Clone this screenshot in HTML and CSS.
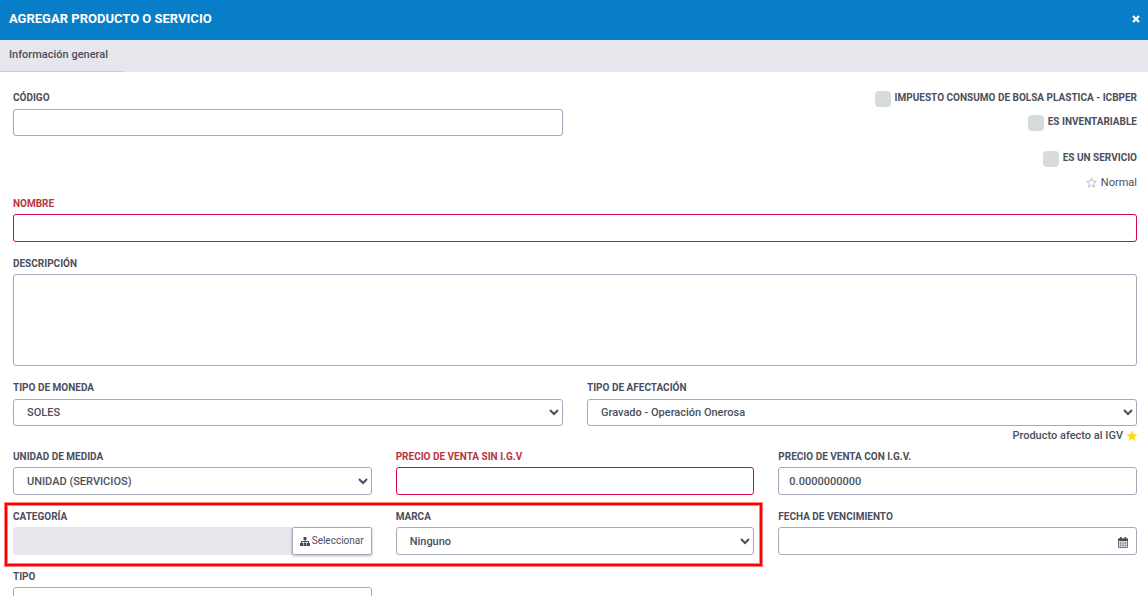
FILE: index.html
```html
<!DOCTYPE html>
<html lang="es">
<head>
    <meta charset="UTF-8">
    <meta name="viewport" content="width=device-width, initial-scale=1.0">
    <title>Agregar producto o servicio</title>
    <link rel="stylesheet" href="styles.css">
</head>
<body>
    <header class="modal-header">
        <h1 class="modal-title">AGREGAR PRODUCTO O SERVICIO</h1>
        <button type="button" class="modal-close" aria-label="Cerrar">
            <svg width="8" height="8" viewBox="0 0 8 8" aria-hidden="true">
                <path d="M1 1L7 7M7 1L1 7" stroke="#fff" stroke-width="2.2"/>
            </svg>
        </button>
    </header>
    <nav class="tabs">
        <a href="#general" class="tab active">Información general</a>
    </nav>
    <form id="general" class="product-form" autocomplete="off">
        <div class="row row-half row-top">
            <div class="field">
                <label for="codigo">CÓDIGO</label>
                <input type="text" id="codigo" class="control">
            </div>
            <div class="options">
                <label class="check"><input type="checkbox"><span>IMPUESTO CONSUMO DE BOLSA PLASTICA - ICBPER</span></label>
                <label class="check"><input type="checkbox"><span>ES INVENTARIABLE</span></label>
                <label class="check check-service"><input type="checkbox"><span>ES UN SERVICIO</span></label>
                <div class="rating">
                    <svg width="11" height="11" viewBox="0 0 24 24" aria-hidden="true">
                        <path d="M12 2l3 7 7.500.600-5.700 5 1.700 7.400-6.500-4-6.500 4 1.700-7.400-5.700-5L9 9z" fill="none" stroke="#b4b8c1" stroke-width="2"/>
                    </svg>
                    <span>Normal</span>
                </div>
            </div>
        </div>

        <div class="row">
            <div class="field invalid">
                <label for="nombre">NOMBRE</label>
                <input type="text" id="nombre" class="control">
            </div>
        </div>

        <div class="row">
            <div class="field">
                <label for="descripcion">DESCRIPCIÓN</label>
                <textarea id="descripcion" class="control"></textarea>
            </div>
        </div>

        <div class="row row-half row-tax">
            <div class="field">
                <label for="moneda">TIPO DE MONEDA</label>
                <select id="moneda" class="control"><option>SOLES</option></select>
            </div>
            <div class="field">
                <label for="afectacion">TIPO DE AFECTACIÓN</label>
                <select id="afectacion" class="control"><option>Gravado - Operación Onerosa</option></select>
                <div class="hint">
                    <span>Producto afecto al IGV</span>
                    <svg width="10" height="10" viewBox="0 0 24 24" aria-hidden="true">
                        <path d="M12 0l3.500 8 8.500.800-6.500 5.700 2 8.500-7.500-4.500L4.500 23l2-8.500L0 8.800 8.500 8z" fill="#ffdc0c" stroke="#ffdc0c"/>
                    </svg>
                </div>
            </div>
        </div>

        <div class="row row-third">
            <div class="field">
                <label for="unidad">UNIDAD DE MEDIDA</label>
                <select id="unidad" class="control"><option>UNIDAD (SERVICIOS)</option></select>
            </div>
            <div class="field invalid">
                <label for="precio-sin">PRECIO DE VENTA SIN I.G.V</label>
                <input type="text" id="precio-sin" class="control">
            </div>
            <div class="field">
                <label for="precio-con">PRECIO DE VENTA CON I.G.V.</label>
                <input type="text" id="precio-con" class="control" value="0.0000000000">
            </div>
        </div>

        <div class="row row-third">
            <div class="highlight">
                <div class="field">
                    <label for="categoria">CATEGORÍA</label>
                    <div class="input-group">
                        <input type="text" id="categoria" class="control" disabled>
                        <button type="button" class="btn-select">
                            <svg width="10" height="9" viewBox="0 0 20 18" fill="#464a57" aria-hidden="true">
                                <path d="M7 0h6v6h-2v2h7v4h2v6h-6v-6h2v-2h-5v2h2v6H7v-6h2v-2H4v2h2v6H0v-6h2V8h7V6H7z"/>
                            </svg>
                            <span>Seleccionar</span>
                        </button>
                    </div>
                </div>
                <div class="field">
                    <label for="marca">MARCA</label>
                    <select id="marca" class="control"><option>Ninguno</option></select>
                </div>
            </div>
            <div class="field">
                <label for="vencimiento">FECHA DE VENCIMIENTO</label>
                <div class="date-input">
                    <input type="text" id="vencimiento" class="control">
                    <svg width="10" height="11" viewBox="0 0 20 22" aria-hidden="true">
                        <path d="M1 4h18v17H1z" fill="#fff" stroke="#464a57" stroke-width="1.500"/>
                        <path d="M0 3h20v5H0zM4 0h3v5H4zM13 0h3v5h-3z" fill="#464a57"/>
                        <path d="M1 12h18M1 16.500h18M5.500 8v13M10 8v13M14.500 8v13" stroke="#464a57"/>
                    </svg>
                </div>
            </div>
        </div>

        <div class="row row-third">
            <div class="field">
                <label for="tipo">TIPO</label>
                <input type="text" id="tipo" class="control">
            </div>
        </div>
    </form>
</body>
</html>
```
FILE: styles.css
```css
* {
    box-sizing: border-box;
}
body {
    margin: 0;
    font-family: Roboto, "Liberation Sans", sans-serif;
    font-size: 11px;
    line-height: 14px;
    color: #4b4f5c;
    background: #fff;
}
.modal-header {
    display: flex;
    align-items: center;
    justify-content: space-between;
    height: 40px;
    padding: 0 8px 3px 9px;
    background: #087ec9;
    color: #fff;
}
.modal-title {
    margin: 0;
    font-size: 13px;
    font-weight: 700;
}
.modal-close {
    display: flex;
    padding: 0;
    border: none;
    background: none;
    cursor: pointer;
}
.tabs {
    display: flex;
    height: 32px;
    background: #e6e7ec;
}
.tab {
    padding: 8px 15px 0 9px;
    border-bottom: 1px solid #c9ccd6;
    color: inherit;
    font-weight: 500;
    text-decoration: none;
}
.product-form {
    height: calc(100vh - 72px);
    padding: 19px 11px 0 13px;
    overflow: hidden;
}
.row {
    display: grid;
    column-gap: 24px;
    margin-bottom: 15px;
}
.row-half {
    grid-template-columns: repeat(2, 1fr);
}
.row-third {
    grid-template-columns: repeat(3, 1fr);
}
.row-top,
.row-tax {
    margin-bottom: 7px;
}
.field {
    display: flex;
    flex-direction: column;
    gap: 3px;
    min-width: 0;
}
.field label,
.check {
    font-size: 10px;
    font-weight: 700;
}
.control {
    width: 100%;
    height: 28px;
    margin: 0;
    padding: 0 10px;
    border: 1px solid #a4a9ba;
    border-radius: 3px;
    background-color: #fff;
    color: inherit;
    font: inherit;
    font-weight: 500;
    outline: none;
}
.row-half .field {
    gap: 4px;
}
.row-half .control {
    height: 27px;
}
select.control {
    padding: 0 0 0 9px;
}
textarea.control {
    display: block;
    height: 92px;
    resize: none;
}
.control:disabled {
    border-color: #e6e7ec;
    background: #e6e7ec;
}
.invalid label {
    color: #b83444;
}
.invalid .control {
    border-color: #d9044f;
}
.options {
    display: flex;
    flex-direction: column;
    align-items: flex-end;
    gap: 8px;
}
.check {
    display: flex;
    gap: 4px;
}
.check-service {
    margin-top: 12px;
}
.check input {
    appearance: none;
    width: 16px;
    height: 16px;
    margin: 0;
    border-radius: 4px;
    background: #d6dcde;
}
.rating,
.hint {
    display: flex;
    align-items: center;
    gap: 4px;
    line-height: 15px;
}
.hint {
    justify-content: flex-end;
    margin-top: -2px;
    font-weight: 500;
}
.highlight {
    display: grid;
    grid-column: span 2;
    grid-template-columns: subgrid;
    position: relative;
}
.highlight::after {
    content: "";
    position: absolute;
    inset: -7px -8px -11px;
    border: 2px solid #f00;
    box-shadow: 0 0 0 1px rgba(255, 0, 0, 0.5), inset 0 0 0 1px rgba(255, 0, 0, 0.5);
    pointer-events: none;
}
.input-group {
    display: flex;
}
.input-group .control {
    flex: 1;
    min-width: 0;
    border-radius: 3px 0 0 3px;
}
.btn-select {
    display: flex;
    align-items: center;
    justify-content: center;
    gap: 2px;
    width: 80px;
    padding: 0;
    border: 1px solid #a4a9ba;
    border-radius: 2px;
    background: #fff;
    box-shadow: 0 1px 3px rgba(70, 74, 87, 0.4);
    color: inherit;
    font: inherit;
    font-size: 10px;
    cursor: pointer;
}
.date-input {
    position: relative;
}
.date-input .control {
    display: block;
}
.date-input svg {
    position: absolute;
    top: 10px;
    right: 9px;
}
```
